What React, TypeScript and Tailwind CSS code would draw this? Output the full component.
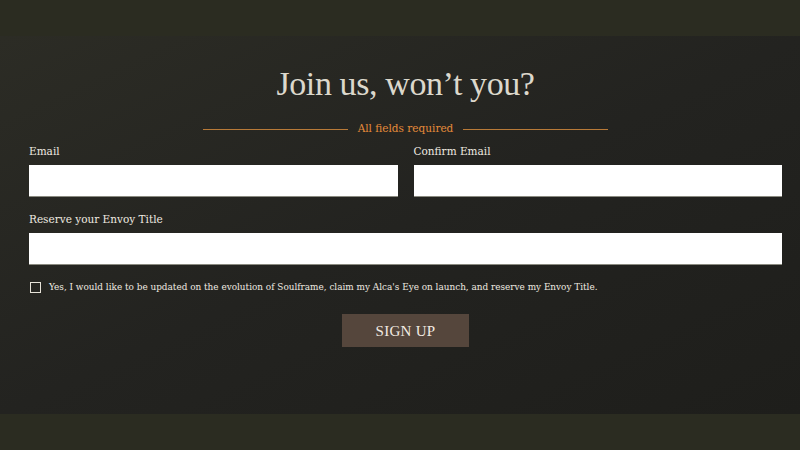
import React, { useState } from 'react';

export default function App() {
  const [agree, setAgree] = useState(false);

  return (
    <div className="w-[800px] h-[450px] bg-[#2b2c21] pt-[36px] overflow-hidden">
      <div className="h-[378px] bg-gradient-to-br from-[#2c2c25] via-[#232320] to-[#1e1e1b] pl-[29px] pr-[18px] pt-[20px]" style={{ fontFamily: '"DejaVu Serif", "Liberation Serif", serif' }}>
        {/* Title */}
        <h1 className="text-center text-[34px] leading-[56px] tracking-[-0.4px] text-[#dcd8cc]" style={{ fontFamily: '"Liberation Serif", serif' }}>
          Join us, won’t you?
        </h1>

        {/* Divider */}
        <div className="flex items-center justify-center gap-[10px] mt-[9px] h-[16px]">
          <div className="w-[145px] border-t border-[#b87a38]" />
          <span className="text-[10.5px] text-[#e58b3a]">All fields required</span>
          <div className="w-[145px] border-t border-[#b87a38]" />
        </div>

        {/* Email row */}
        <div className="grid grid-cols-2 gap-[16px] mt-[6px]">
          <label className="flex flex-col">
            <span className="text-[10.5px] leading-[16px] text-[#efeae0] mb-[6px]">Email</span>
            <input className="h-[32px] bg-white border-b border-[#8a8a80] outline-none px-2" />
          </label>
          <label className="flex flex-col">
            <span className="text-[10.5px] leading-[16px] text-[#efeae0] mb-[6px]">Confirm Email</span>
            <input className="h-[32px] bg-white border-b border-[#8a8a80] outline-none px-2" />
          </label>
        </div>

        {/* Envoy title */}
        <label className="flex flex-col mt-[14px]">
          <span className="text-[10.5px] leading-[16px] text-[#efeae0] mb-[6px]">Reserve your Envoy Title</span>
          <input className="h-[32px] bg-white border-b border-[#8a8a80] outline-none px-2" />
        </label>

        {/* Checkbox */}
        <label className="flex items-center gap-[8px] mt-[16px] pl-px cursor-pointer">
          <span
            onClick={() => setAgree(!agree)}
            className={`w-[11px] h-[11px] border-[1.5px] border-[#e6e2d8] flex-none ${agree ? 'bg-[#e6e2d8]' : ''}`}
          />
          <span className="text-[8.9px] text-[#efeae0]">
            Yes, I would like to be updated on the evolution of Soulframe, claim my Alca's Eye on launch, and reserve my Envoy Title.
          </span>
        </label>

        {/* Button */}
        <div className="flex justify-center mt-[20px]">
          <button className="w-[127px] h-[33px] bg-[#55463c] text-[#f2ebe3] text-[15px] tracking-[0.3px]" style={{ fontFamily: '"Liberation Serif", serif' }}>
            SIGN UP
          </button>
        </div>
      </div>
    </div>
  );
}
